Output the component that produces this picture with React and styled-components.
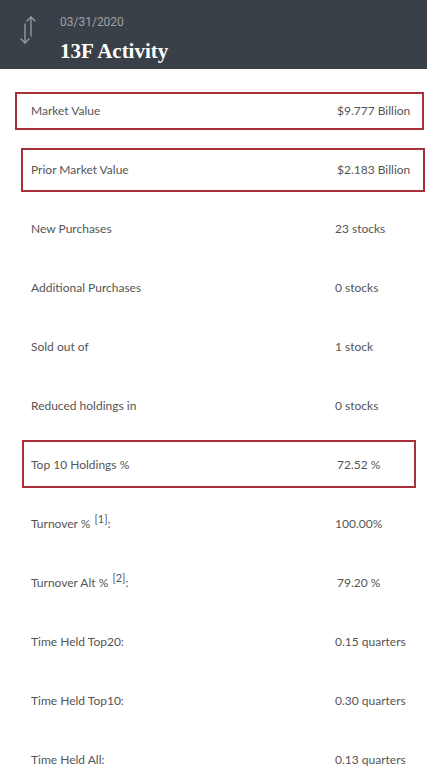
import React from "react";
import styled, { createGlobalStyle } from "styled-components";

const Global = createGlobalStyle`
  html, body { margin: 0; padding: 0; background: #fff; }
  body { font-family: Lato, "Open Sans", sans-serif; }
`;

const Page = styled.div`
  width: 427px;
  background: #fff;
`;

const Header = styled.header`
  height: 69px;
  background: #3a4047;
  display: flex;
  align-items: flex-start;
  box-sizing: border-box;
  padding: 12px 0 0 15px;
  gap: 21px;
`;

const IconWrap = styled.div`
  width: 24px;
  height: 36px;
  margin-top: 4px;
`;

const Titles = styled.div`
  display: flex;
  flex-direction: column;
`;

const DateText = styled.div`
  font-family: Roboto, sans-serif;
  font-size: 12px;
  line-height: 20px;
  color: #9ea3a8;
`;

const Title = styled.h1`
  margin: 7px 0 0;
  font-family: "Liberation Serif", serif;
  font-weight: 700;
  font-size: 21px;
  line-height: 24px;
  color: #fff;
`;

const List = styled.div`
  padding-top: 12px;
`;

const Row = styled.div`
  position: relative;
  height: 59px;
  display: grid;
  grid-template-columns: 304px 1fr;
  align-items: center;
  padding-left: 31px;
  font-size: 12px;
  color: #555;
`;

const Label = styled.span`
  white-space: nowrap;
`;

const Value = styled.span`
  white-space: nowrap;
  padding-left: ${(p) => p.$shift || 0}px;
`;

const Sup = styled.sup`
  font-size: 11px;
  vertical-align: 5px;
  line-height: 0;
  margin-left: 1px;
`;

const Highlight = styled.div`
  position: absolute;
  left: ${(p) => p.$left}px;
  top: ${(p) => p.$top}px;
  width: ${(p) => p.$width}px;
  height: ${(p) => p.$height}px;
  border: 2px solid #a8303b;
  box-sizing: border-box;
  pointer-events: none;
`;

const ArrowsIcon = () => (
  <svg width="24" height="36" viewBox="0 0 24 36" fill="none" stroke="#93a3a8" strokeWidth="1.3" strokeLinecap="round" strokeLinejoin="round">
    <path d="M16 1 V20" />
    <path d="M12 5 L16 1 L20 5" />
    <path d="M10 8 V27" />
    <path d="M6 23 L10 27 L14 23" />
  </svg>
);

const rows = [
  { label: "Market Value", value: "$9.777 Billion", shift: 2, hl: { left: 15, top: 11, width: 409, height: 38 } },
  { label: "Prior Market Value", value: "$2.183 Billion", shift: 2, hl: { left: 21, top: 8, width: 404, height: 44 } },
  { label: "New Purchases", value: "23 stocks" },
  { label: "Additional Purchases", value: "0 stocks" },
  { label: "Sold out of", value: "1 stock" },
  { label: "Reduced holdings in", value: "0 stocks" },
  { label: "Top 10 Holdings %", value: "72.52 %", shift: 2, hl: { left: 22, top: 5, width: 394, height: 48 } },
  { label: "Turnover %", sup: "[1]", value: "100.00%", shift: -1 },
  { label: "Turnover Alt %", sup: "[2]", value: "79.20 %", shift: 2 },
  { label: "Time Held Top20:", value: "0.15 quarters" },
  { label: "Time Held Top10:", value: "0.30 quarters" },
  { label: "Time Held All:", value: "0.13 quarters" },
];

export default function App() {
  return (
    <Page>
      <Global />
      <Header>
        <IconWrap>
          <ArrowsIcon />
        </IconWrap>
        <Titles>
          <DateText>03/31/2020</DateText>
          <Title>13F Activity</Title>
        </Titles>
      </Header>
      <List>
        {rows.map((r) => (
          <Row key={r.label}>
            <Label>
              {r.label}
              {r.sup && (
                <>
                  {" "}
                  <Sup>{r.sup}</Sup>:
                </>
              )}
            </Label>
            <Value $shift={r.shift}>{r.value}</Value>
            {r.hl && <Highlight $left={r.hl.left} $top={r.hl.top} $width={r.hl.width} $height={r.hl.height} />}
          </Row>
        ))}
      </List>
    </Page>
  );
}
